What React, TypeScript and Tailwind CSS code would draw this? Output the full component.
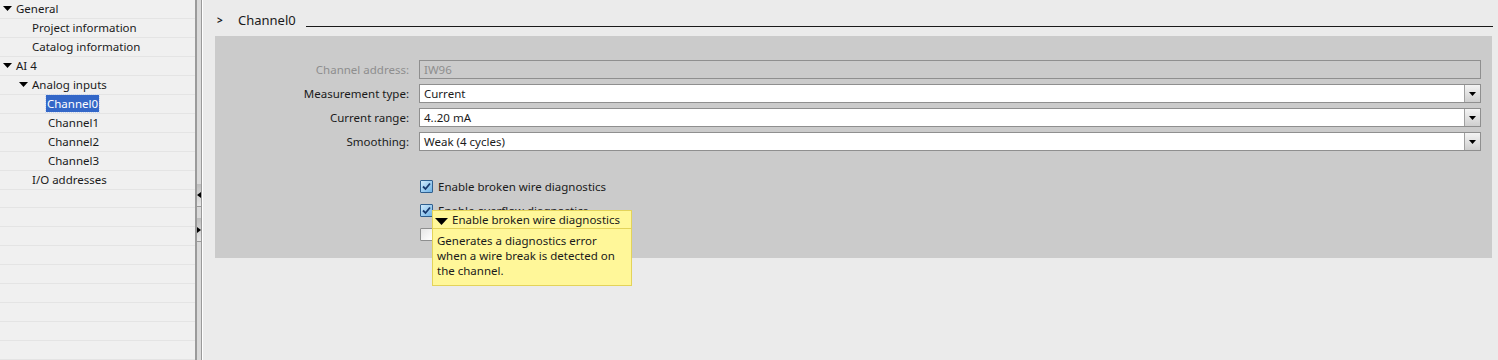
import React from "react";

const font = { fontFamily: '"Noto Sans", "Open Sans", sans-serif' };

type Node = { label: string; level: number; arrow?: boolean; selected?: boolean };
const tree: Node[] = [
  { label: "General", level: 0, arrow: true },
  { label: "Project information", level: 1 },
  { label: "Catalog information", level: 1 },
  { label: "AI 4", level: 0, arrow: true },
  { label: "Analog inputs", level: 1, arrow: true },
  { label: "Channel0", level: 2, selected: true },
  { label: "Channel1", level: 2 },
  { label: "Channel2", level: 2 },
  { label: "Channel3", level: 2 },
  { label: "I/O addresses", level: 1 },
];

function DownTri() {
  return (
    <svg width="9" height="5" viewBox="0 0 9 5" className="ml-[3px]">
      <path d="M0 0 H9 L4.5 5 Z" fill="#000" />
    </svg>
  );
}

function TreeRow({ n }: { n?: Node }) {
  const indent = n ? [0, 16, 32][n.level] : 0;
  return (
    <div className="h-[19px] border-b border-[#e4e4e4] flex items-center relative">
      {n && (
        <div className="flex items-center" style={{ paddingLeft: indent }}>
          <div className="w-[16px] flex items-center">{n.arrow && <DownTri />}</div>
          <span
            className={
              n.selected
                ? "bg-[#3367c8] text-white px-[1px] leading-[17px] outline outline-1 outline-dotted outline-[#c9d7f0] -ml-[2px]"
                : "text-[#1a1a1a]"
            }
          >
            {n.label}
          </span>
        </div>
      )}
    </div>
  );
}

function Dropdown({ value }: { value: string }) {
  return (
    <div className="flex-1 h-[19px] flex border border-[#8f8f8f] bg-white">
      <div className="flex-1 pl-[4px] leading-[17px] text-[#1a1a1a]">{value}</div>
      <div className="w-[16px] border-l border-[#a0a0a0] bg-gradient-to-b from-[#f4f4f4] to-[#cfcfcf] flex items-center justify-center">
        <svg width="7" height="4" viewBox="0 0 7 4">
          <path d="M0 0 H7 L3.5 4 Z" fill="#000" />
        </svg>
      </div>
    </div>
  );
}

function Row({ label, children, disabled }: { label: string; children: React.ReactNode; disabled?: boolean }) {
  return (
    <div className="flex items-center h-[19px]">
      <div className={"w-[204px] text-right pr-[10px] " + (disabled ? "text-[#8e8e8e]" : "text-[#1a1a1a]")}>{label}</div>
      {children}
    </div>
  );
}

function Check({ checked }: { checked: boolean }) {
  if (!checked)
    return <div className="w-[13px] h-[13px] border border-[#8e8f8f] bg-gradient-to-br from-[#e6e6e6] to-[#ffffff] rounded-[1px]" />;
  return (
    <div className="w-[13px] h-[13px] border border-[#2f5f8f] bg-gradient-to-br from-[#cfe9fb] to-[#6fb3e6] rounded-[1px] flex items-center justify-center">
      <svg width="9" height="9" viewBox="0 0 9 9">
        <path d="M1 4.5 L3.5 7 L8 1.5" stroke="#17396e" strokeWidth="1.8" fill="none" />
      </svg>
    </div>
  );
}

export default function App() {
  return (
    <div className="w-[1498px] h-[360px] flex text-[11.5px] overflow-hidden" style={font}>
      <div className="w-[195px] bg-[#f0f0f0] flex flex-col">
        {tree.map((n, i) => (
          <TreeRow key={i} n={n} />
        ))}
        {Array.from({ length: 9 }).map((_, i) => (
          <TreeRow key={"e" + i} />
        ))}
      </div>
      <div className="w-[8px] flex bg-[#ebebeb]">
        <div className="w-[2px] bg-[#9a9a9a]" />
        <div className="w-[4px] bg-[#dadada] flex flex-col">
          <div className="h-[184px]" />
          <div className="h-[23px] bg-gradient-to-b from-[#bdbdbd] to-[#e6e6e6] border-b border-[#9a9a9a] flex items-center justify-end">
            <svg width="4" height="6" viewBox="0 0 4 6"><path d="M4 0 V6 L0 3 Z" fill="#000" /></svg>
          </div>
          <div className="h-[11px]" />
          <div className="h-[24px] bg-gradient-to-b from-[#bdbdbd] to-[#e6e6e6] border-b border-[#9a9a9a] flex items-center justify-start">
            <svg width="4" height="6" viewBox="0 0 4 6"><path d="M0 0 V6 L4 3 Z" fill="#000" /></svg>
          </div>
        </div>
        <div className="w-[1px] bg-[#9a9a9a]" />
        <div className="w-[1px] bg-[#ffffff]" />
      </div>
      <div className="flex-1 bg-[#ebebeb] pl-[12px] pr-[6px] relative">
        <div className="h-[36px] flex items-start pt-[11px]">
          <span className="w-[23px] pl-[2px] text-[10px] font-bold text-[#1a1a1a] leading-[18px]">&gt;</span>
          <span className="text-[13px] text-[#1a1a1a] leading-[18px]">Channel0</span>
          <div className="flex-1 ml-[10px] mr-[-1px] mt-[15px] h-[1px] bg-[#1a1a1a]" />
        </div>
        <div className="h-[222px] bg-[#cbcbcb] pt-[24px] pr-[11px] flex flex-col">
          <div className="flex flex-col gap-[5px]">
            <Row label="Channel address:" disabled>
              <div className="flex-1 h-[19px] border border-[#8f8f8f] pl-[4px] leading-[17px] text-[#8e8e8e]">IW96</div>
            </Row>
            <Row label="Measurement type:">
              <Dropdown value="Current" />
            </Row>
            <Row label="Current range:">
              <Dropdown value="4..20 mA" />
            </Row>
            <Row label="Smoothing:">
              <Dropdown value="Weak (4 cycles)" />
            </Row>
          </div>
          <div className="flex flex-col gap-[11px] mt-[29px] pl-[205px]">
            <div className="flex items-center gap-[5px] h-[13px]">
              <Check checked />
              <span className="text-[#1a1a1a]">Enable broken wire diagnostics</span>
            </div>
            <div className="flex items-center gap-[5px] h-[13px]">
              <Check checked />
              <span className="text-[#1a1a1a]">Enable overflow diagnostics</span>
            </div>
            <div className="flex items-center gap-[5px] h-[13px]">
              <Check checked={false} />
            </div>
          </div>
        </div>
        <div className="absolute left-[229px] top-[210px] w-[200px] h-[76px] bg-[#fff799] border border-[#e3d35a] text-[#1a1a1a]">
          <div className="h-[18px] border-b border-[#e3d35a] flex items-center pl-[2px]">
            <svg width="13" height="7" viewBox="0 0 13 7" className="mt-[4px]"><path d="M0 0 H13 L6.5 7 Z" fill="#000" /></svg>
            <span className="ml-[4px] leading-[16px]">Enable broken wire diagnostics</span>
          </div>
          <div className="pl-[4px] pt-[4px] leading-[15px]">
            Generates a diagnostics error
            <br />
            when a wire break is detected on
            <br />
            the channel.
          </div>
        </div>
      </div>
    </div>
  );
}
